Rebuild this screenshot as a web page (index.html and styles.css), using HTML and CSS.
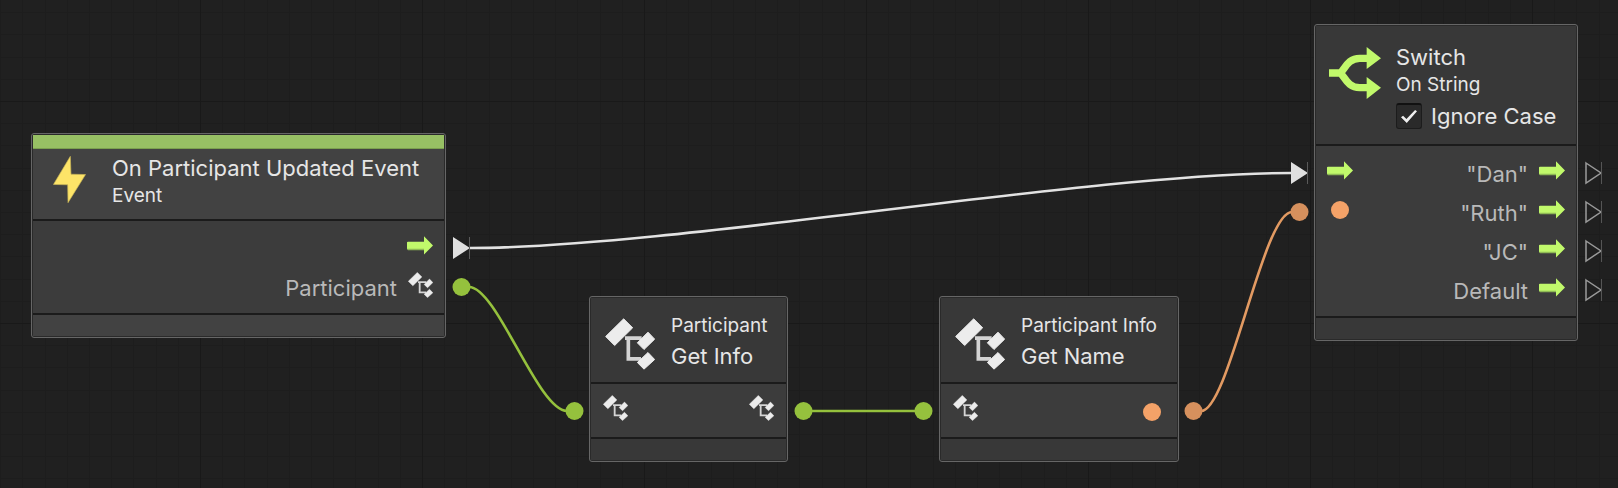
FILE: index.html
```html
<!DOCTYPE html>
<html lang="en">
<head>
<meta charset="utf-8">
<title>Script Graph</title>
<link rel="stylesheet" href="styles.css">
</head>
<body>
<svg class="defs" aria-hidden="true">
  <symbol id="arrow" viewBox="0 0 78 56">
    <path fill="#8fba55" d="M0 18h51v24H3l-3-3z"/>
    <path fill="#c1f96b" d="M0 20q0-3 3-3h48V0l27 28-27 27V38H0z"/>
  </symbol>
  <symbol id="unit" viewBox="0 0 150 155">
    <path fill="none" stroke="#d4d4d4" stroke-width="11" d="M60 60h50M70 60v62h38"/>
    <path fill="#ececec" stroke="#ececec" stroke-width="3" stroke-linejoin="round" d="M56 2l27 27-54 53L2 55zM129 42l20 21-32 31-20-20zM129 103l20 21-32 29-20-20z"/>
  </symbol>
  <symbol id="dot" viewBox="0 0 18 18"><circle cx="9" cy="9" r="9" fill="#f4a268"/></symbol>
</svg>
<main class="graph">
  <svg class="layer" aria-hidden="true">
    <defs>
      <pattern id="grid" x="200" y="101" width="222" height="222" patternUnits="userSpaceOnUse">
        <path stroke="#1d1d1d" d="M22.5 0v222M44.5 0v222M67.5 0v222M89.5 0v222M111.5 0v222M133.5 0v222M155.5 0v222M178.5 0v222M200.5 0v222M0 22.5h222M0 44.5h222M0 67.5h222M0 89.5h222M0 111.5h222M0 133.5h222M0 155.5h222M0 178.5h222M0 200.5h222"/>
        <path stroke="#191919" d="M.5 0v222M0 .5h222"/>
      </pattern>
    </defs>
    <rect width="100%" height="100%" fill="url(#grid)"/>
    <g fill="none" stroke-width="2.600">
      <path stroke="#e2e2e2" d="M469 248C674 248 1087 173 1292 173"/>
      <path stroke="#95c13d" d="M469 287C497 287 538 411 567 411M803 411H923"/>
      <path stroke="#e29a62" d="M1201 411C1229 411 1263 212 1292 212"/>
    </g>
    <g fill="#e0e0e0">
      <path d="M453 237l17 11-17 11zM1291 162l17 11-17 11z"/>
      <path fill="#5a5a5a" d="M469 237h1v22h-1zM1307 162h1v22h-1z"/>
    </g>
    <g fill="#95c13d">
      <circle cx="461.500" cy="287" r="9"/><circle cx="574.500" cy="411" r="9"/>
      <circle cx="803.500" cy="411" r="9"/><circle cx="923.500" cy="411" r="9"/>
    </g>
    <g fill="#d6905d"><circle cx="1193.500" cy="411" r="9"/><circle cx="1299.500" cy="212" r="9"/></g>
    <g fill="none" stroke="#9a9a9a" stroke-width="1.500">
      <path d="M1586 163l15 10-15 10zM1586 202l15 10-15 10zM1586 241l15 10-15 10zM1586 280l15 10-15 10z"/>
      <path stroke="#555" stroke-width="1" d="M1601.500 162v22M1601.500 201v22M1601.500 240v22M1601.500 279v22"/>
    </g>
  </svg>

  <section class="node node-event">
    <div class="accent"></div>
    <header class="head">
      <svg class="icon-bolt" viewBox="0 0 99 142"><path fill="#fde468" stroke="#c9b458" stroke-width="2" d="M52 1l2 54 44 1-53 85-1-54-43-1z"/></svg>
      <div class="titles"><h2 class="title">On Participant Updated Event</h2><p class="subtitle">Event</p></div>
    </header>
    <div class="body">
      <div class="ports"></div>
      <ul class="ports outputs">
        <li class="port"><svg class="icon-arrow"><use href="#arrow"/></svg></li>
        <li class="port"><span class="label">Participant</span><svg class="icon-unit"><use href="#unit"/></svg></li>
      </ul>
    </div>
    <footer class="foot"></footer>
  </section>

  <section class="node node-member node-info">
    <header class="head">
      <svg class="icon-unit-large"><use href="#unit"/></svg>
      <div class="titles"><p class="subtitle">Participant</p><h2 class="title">Get Info</h2></div>
    </header>
    <div class="body">
      <svg class="icon-unit"><use href="#unit"/></svg>
      <svg class="icon-unit"><use href="#unit"/></svg>
    </div>
    <footer class="foot"></footer>
  </section>

  <section class="node node-member node-name">
    <header class="head">
      <svg class="icon-unit-large"><use href="#unit"/></svg>
      <div class="titles"><p class="subtitle">Participant Info</p><h2 class="title">Get Name</h2></div>
    </header>
    <div class="body">
      <svg class="icon-unit"><use href="#unit"/></svg>
      <svg class="icon-dot"><use href="#dot"/></svg>
    </div>
    <footer class="foot"></footer>
  </section>

  <section class="node node-switch">
    <header class="head">
      <svg class="icon-switch" viewBox="0 0 156 156">
        <path fill="none" stroke="#c1f96b" stroke-width="22" d="M0 78h38M34 78C48 66 56 34 92 34h24M34 78C48 90 56 122 92 122h24"/>
        <path fill="#c1f96b" d="M113 0l43 34-43 32zM113 90l43 32-43 34z"/>
      </svg>
      <div class="titles">
        <h2 class="title">Switch</h2><p class="subtitle">On String</p>
        <label class="option"><input class="check" type="checkbox" checked>Ignore Case</label>
      </div>
    </header>
    <div class="body">
      <ul class="ports">
        <li class="port"><svg class="icon-arrow"><use href="#arrow"/></svg></li>
        <li class="port"><svg class="icon-dot"><use href="#dot"/></svg></li>
      </ul>
      <ul class="ports outputs">
        <li class="port"><span class="label">"Dan"</span><svg class="icon-arrow"><use href="#arrow"/></svg></li>
        <li class="port"><span class="label">"Ruth"</span><svg class="icon-arrow"><use href="#arrow"/></svg></li>
        <li class="port"><span class="label">"JC"</span><svg class="icon-arrow"><use href="#arrow"/></svg></li>
        <li class="port"><span class="label">Default</span><svg class="icon-arrow"><use href="#arrow"/></svg></li>
      </ul>
    </div>
    <footer class="foot"></footer>
  </section>
</main>
</body>
</html>
```
FILE: styles.css
```css
* { box-sizing: border-box; margin: 0; padding: 0; }
body {
  background: #202020;
  color: #e6e6e6;
  font-family: Inter, "Liberation Sans", sans-serif;
  font-size: 22px;
}
.defs { position: absolute; width: 0; height: 0; }
.graph { position: relative; min-height: 100vh; overflow: hidden; }
.layer { position: absolute; inset: 0; width: 100%; height: 100%; }
svg { display: block; flex: none; }
ul { list-style: none; }

.node {
  position: absolute;
  border: 1px solid #666;
  border-radius: 3px;
  background: #2a2a2a;
  padding: 1px;
}
.node-event { left: 31px; top: 133px; width: 415px; }
.node-info { left: 589px; top: 296px; width: 199px; }
.node-name { left: 939px; top: 296px; width: 240px; }
.node-switch { left: 1314px; top: 24px; width: 264px; }

.accent { height: 14px; background: #97c064; border-bottom: 1px solid #7ba04f; }
.head { display: flex; background: #383838; white-space: nowrap; }
.body {
  display: flex;
  justify-content: space-between;
  background: #3c3c3c;
  border: solid #1b1b1b;
  border-width: 2px 0;
}
.foot { height: 21px; background: #383838; }
.node-event .head, .node-event .foot { background: #424242; }

.title { font-size: 22px; font-weight: 400; line-height: 28px; }
.subtitle { font-size: 19px; line-height: 28px; }
.label { color: #b9b9b9; line-height: 28px; padding-top: 6px; }

.node-event .head { gap: 26px; padding: 5px 20px 9px; }
.node-event .body { padding: 4px 11px 8px; }
.node-event .port { height: 40px; }

.node-member .head { align-items: center; gap: 16px; padding: 13px 14px 11px; }
.node-member .title, .node-member .subtitle { line-height: 30px; }
.node-member .body { align-items: flex-end; padding: 11px 12px 16px; }

.node-switch .head { gap: 15px; padding: 17px 13px 11px; }
.node-switch .body { padding: 5px 11px 9px; }

.port { display: flex; align-items: center; gap: 11px; height: 39px; }
.outputs .port { justify-content: flex-end; }

.option { display: flex; align-items: center; gap: 9px; height: 34px; }
.check {
  appearance: none;
  width: 26px;
  height: 26px;
  border: 1px solid #1c1c1c;
  border-top: 2px solid #111;
  border-radius: 3px;
  background: #2a2a2a;
  display: grid;
  place-items: center;
}
.check::after {
  content: "";
  width: 16px;
  height: 13px;
  background: #eee;
  clip-path: polygon(0 55%, 13% 45%, 34% 70%, 88% 0, 100% 10%, 36% 100%);
}

.icon-bolt { width: 33px; height: 47px; margin-top: 2px; }
.icon-arrow { width: 26px; height: 19px; }
.icon-unit { width: 25px; height: 26px; }
.icon-unit-large { width: 50px; height: 52px; margin-top: 6px; }
.icon-dot { width: 18px; height: 18px; margin: 0 4px; }
.icon-switch { width: 52px; height: 52px; margin-top: 4px; }
```
